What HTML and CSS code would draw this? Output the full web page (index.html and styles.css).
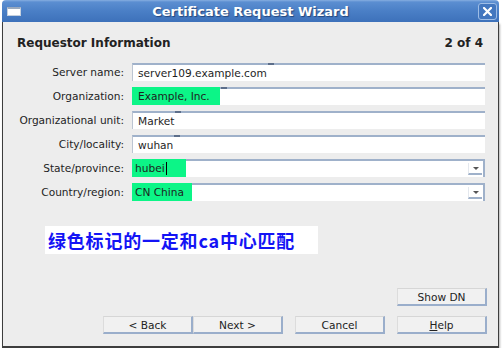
FILE: index.html
```html
<!DOCTYPE html>
<html lang="en">
<head>
    <meta charset="UTF-8">
    <title>Certificate Request Wizard</title>
    <link rel="stylesheet" href="styles.css">
</head>
<body>
    <div class="window">
        <div class="titlebar">
            <span class="menu-icon"></span>
            <span class="title">Certificate Request Wizard</span>
            <span class="close-btn">
                <svg width="9" height="9" viewBox="0 0 9 9">
                    <path d="M1 1L8 8M8 1L1 8" stroke="#fff" stroke-width="2.2" stroke-linecap="square"/>
                </svg>
            </span>
        </div>
        <div class="panel">
            <div class="page-head">
                <span>Requestor Information</span>
                <span>2 of 4</span>
            </div>

            <div class="form">
                <span class="label">Server name:</span>
                <div class="field"><span>server109.example.com</span><span class="tick"></span></div>

                <span class="label">Organization:</span>
                <div class="field"><span class="mark mark-org">Example, Inc.</span><span class="tick"></span></div>

                <span class="label">Organizational unit:</span>
                <div class="field"><span>Market</span><span class="tick"></span></div>

                <span class="label">City/locality:</span>
                <div class="field"><span>wuhan</span><span class="tick"></span></div>

                <span class="label">State/province:</span>
                <div class="field combo"><span class="mark mark-state">hubei<span class="caret"></span></span><span class="arrow"></span></div>

                <span class="label">Country/region:</span>
                <div class="field combo"><span class="mark mark-country">CN China</span><span class="arrow"></span></div>
            </div>

            <div class="note">绿色标记的一定和ca中心匹配</div>

            <div class="extra-row">
                <button class="btn">Show DN</button>
            </div>
            <div class="nav-row">
                <div class="nav-pair">
                    <button class="btn">&lt; Back</button>
                    <button class="btn">Next &gt;</button>
                </div>
                <button class="btn">Cancel</button>
                <button class="btn"><u>H</u>elp</button>
            </div>
        </div>
    </div>
</body>
</html>
```

FILE: styles.css
```css
body {
    margin: 0;
    background: #fff;
    font-family: "DejaVu Sans", sans-serif;
    font-size: 10.6px;
    color: #1e1e1e;
}
.window {
    width: 497px;
    margin-left: 2px;
}
.titlebar {
    display: grid;
    grid-template-columns: 1fr auto 1fr;
    align-items: center;
    height: 22px;
    background: linear-gradient(#86aee0 0, #5b8ed1 2px, #4a7fc6 50%, #3d71ba 100%);
    border-radius: 4px 4px 0 0;
}
.menu-icon {
    width: 14px;
    height: 9px;
    box-sizing: border-box;
    margin-left: 5px;
    background: #fff;
    border: 1px solid #c5d0de;
    border-top: 2px solid #9aa9bd;
}
.title {
    font-weight: bold;
    font-size: 13px;
    color: #fff;
    text-shadow: 1px 1px 1px #23457a;
}
.close-btn {
    justify-self: end;
    margin-right: 2px;
    width: 19px;
    height: 17px;
    box-sizing: border-box;
    border: 1px solid #9ebde6;
    border-radius: 3px;
    background: #4377bf;
    display: flex;
    align-items: center;
    justify-content: center;
}
.panel {
    background: #ededed;
    border: 1px solid #3d3d3d;
    border-top: 0;
    border-bottom-width: 2px;
    padding: 12px 11px 12px 14px;
    box-shadow: 1px 2px 2px rgba(0, 0, 0, 0.3);
}
.page-head {
    display: flex;
    justify-content: space-between;
    height: 18px;
    line-height: 18px;
    padding-right: 4px;
    font-weight: bold;
    font-size: 12px;
    color: #222;
}
.form {
    display: grid;
    grid-template-columns: 107px 1fr;
    grid-auto-rows: 18px;
    column-gap: 8px;
    row-gap: 6px;
    margin-top: 11px;
    padding-right: 2px;
}
.label {
    text-align: right;
    line-height: 18px;
    white-space: nowrap;
}
.field {
    display: flex;
    align-items: center;
    box-sizing: border-box;
    height: 18px;
    padding-left: 5px;
    background: #fff;
    border-top: 2px solid #9fb1ca;
    border-left: 1px solid #bcc5d2;
    white-space: nowrap;
}
.combo {
    padding-left: 2px;
    border-right: 2px solid #9fb1ca;
}
.mark {
    display: flex;
    align-items: center;
    align-self: stretch;
    box-sizing: border-box;
    margin: -2px 0 0 -6px;
    padding-left: 6px;
    background: #0cf587;
}
.combo .mark {
    margin-left: -3px;
    padding-left: 3px;
}
.mark-org {
    width: 88px;
}
.mark-state {
    width: 54px;
}
.mark-country {
    width: 60px;
}
.tick {
    align-self: flex-start;
    width: 6px;
    height: 2px;
    margin: -2px 0 0 1px;
    background: #5c6e8a;
}
.caret {
    display: inline-block;
    width: 1px;
    height: 13px;
    margin-left: 1px;
    background: #000;
}
.arrow {
    margin-left: auto;
    margin-right: 1px;
    width: 14px;
    height: 12px;
    box-sizing: border-box;
    border-left: 1px solid #e4e8ee;
    border-bottom: 2px solid #9fb1ca;
    display: flex;
    align-items: center;
    justify-content: center;
}
.arrow::after {
    content: "";
    border-left: 3px solid transparent;
    border-right: 3px solid transparent;
    border-top: 3px solid #555;
}
.note {
    width: 273px;
    height: 28px;
    box-sizing: border-box;
    margin: 25px 0 0 28px;
    padding-left: 3px;
    background: #fff;
    color: #1414f5;
    font-family: "Noto Sans CJK SC", sans-serif;
    font-weight: bold;
    font-size: 18px;
    letter-spacing: 0.8px;
    line-height: 28px;
}
.extra-row {
    display: flex;
    justify-content: flex-end;
    margin-top: 34px;
}
.nav-row {
    display: flex;
    justify-content: flex-end;
    gap: 12px;
    margin-top: 10px;
}
.nav-pair {
    display: flex;
}
.btn {
    width: 90px;
    height: 18px;
    box-sizing: border-box;
    padding: 0;
    background: #f1f1f1;
    border-style: solid;
    border-width: 1px 2px 2px 1px;
    border-color: #d6d6d6 #9aaecb #9aaecb #dcdcdc;
    font-family: "DejaVu Sans", sans-serif;
    font-size: 10.6px;
    color: #222;
    line-height: 14px;
}
```
